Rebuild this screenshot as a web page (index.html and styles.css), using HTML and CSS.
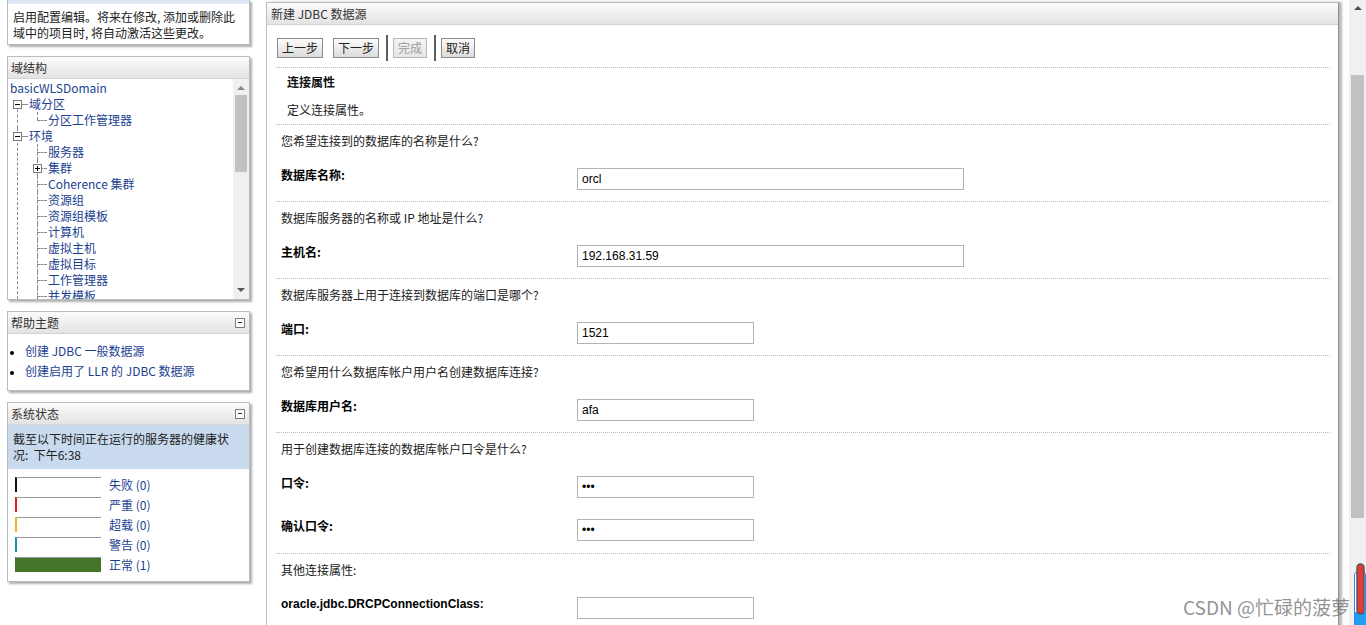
FILE: index.html
```html
<!DOCTYPE html>
<html lang="zh-CN">
<head>
<meta charset="utf-8">
<title>新建 JDBC 数据源</title>
<link rel="stylesheet" href="styles.css">
</head>
<body>
<div class="page">
  <aside class="side">
    <div class="panel panel-change">
      <div class="change-strip"></div>
      <p class="change-text">启用配置编辑。将来在修改, 添加或删除此<br>域中的项目时, 将自动激活这些更改。</p>
    </div>

    <div class="panel">
      <div class="panel-hd"><span>域结构</span></div>
      <div class="tree-box">
        <div class="tree">
          <a class="root" href="#">basicWLSDomain</a>
          <ul class="t1">
            <li><span class="tg"></span><a href="#">域分区</a>
              <ul class="t2">
                <li><a href="#">分区工作管理器</a></li>
              </ul>
            </li>
            <li><span class="tg"></span><a href="#">环境</a>
              <ul class="t2 open">
                <li><a href="#">服务器</a></li>
                <li><span class="tg plus"></span><a href="#">集群</a></li>
                <li><a href="#">Coherence 集群</a></li>
                <li><a href="#">资源组</a></li>
                <li><a href="#">资源组模板</a></li>
                <li><a href="#">计算机</a></li>
                <li><a href="#">虚拟主机</a></li>
                <li><a href="#">虚拟目标</a></li>
                <li><a href="#">工作管理器</a></li>
                <li><a href="#">并发模板</a></li>
              </ul>
            </li>
          </ul>
        </div>
        <div class="mini-scroll">
          <span class="arr up"></span>
          <span class="mini-thumb"></span>
          <span class="mini-fill"></span>
          <span class="arr down"></span>
        </div>
      </div>
    </div>

    <div class="panel">
      <div class="panel-hd"><span>帮助主题</span><span class="minbox"></span></div>
      <ul class="help">
        <li><a href="#">创建 JDBC 一般数据源</a></li>
        <li><a href="#">创建启用了 LLR 的 JDBC 数据源</a></li>
      </ul>
    </div>

    <div class="panel">
      <div class="panel-hd"><span>系统状态</span><span class="minbox"></span></div>
      <div class="status-note">截至以下时间正在运行的服务器的健康状<br>况:&nbsp; 下午6:38</div>
      <div class="health">
        <div class="hrow"><span class="bar c-fail"></span><a href="#">失败 (0)</a></div>
        <div class="hrow"><span class="bar c-crit"></span><a href="#">严重 (0)</a></div>
        <div class="hrow"><span class="bar c-over"></span><a href="#">超载 (0)</a></div>
        <div class="hrow"><span class="bar c-warn"></span><a href="#">警告 (0)</a></div>
        <div class="hrow"><span class="bar c-ok"></span><a href="#">正常 (1)</a></div>
      </div>
    </div>
  </aside>

  <main class="main">
    <div class="panel-hd main-hd"><span>新建 JDBC 数据源</span></div>
    <div class="main-body">
      <div class="toolbar">
        <button class="btn" type="button">上一步</button>
        <button class="btn gap" type="button">下一步</button>
        <span class="sep"></span>
        <button class="btn disabled" type="button" disabled>完成</button>
        <span class="sep"></span>
        <button class="btn" type="button">取消</button>
      </div>

      <section class="sec sec-head">
        <div class="sec-title">连接属性</div>
        <div class="sec-desc">定义连接属性。</div>
      </section>

      <section class="sec">
        <div class="q">您希望连接到的数据库的名称是什么?</div>
        <div class="field"><label class="lbl">数据库名称:</label><input class="inp long" type="text" value="orcl"></div>
      </section>

      <section class="sec">
        <div class="q">数据库服务器的名称或 IP 地址是什么?</div>
        <div class="field"><label class="lbl">主机名:</label><input class="inp long" type="text" value="192.168.31.59"></div>
      </section>

      <section class="sec">
        <div class="q">数据库服务器上用于连接到数据库的端口是哪个?</div>
        <div class="field"><label class="lbl">端口:</label><input class="inp short" type="text" value="1521"></div>
      </section>

      <section class="sec">
        <div class="q">您希望用什么数据库帐户用户名创建数据库连接?</div>
        <div class="field"><label class="lbl">数据库用户名:</label><input class="inp short" type="text" value="afa"></div>
      </section>

      <section class="sec sec-pw">
        <div class="q">用于创建数据库连接的数据库帐户口令是什么?</div>
        <div class="field"><label class="lbl">口令:</label><input class="inp short" type="password" value="abc"></div>
        <div class="field field-2"><label class="lbl">确认口令:</label><input class="inp short" type="password" value="abc"></div>
      </section>

      <section class="sec">
        <div class="q">其他连接属性:</div>
        <div class="field"><label class="lbl lbl-latin">oracle.jdbc.DRCPConnectionClass:</label><input class="inp short" type="text" value=""></div>
      </section>
    </div>
  </main>

  <div class="vscroll">
    <span class="v-up"></span>
    <span class="v-thumb"></span>
  </div>
</div>

<div class="watermark">CSDN @忙碌的菠萝</div>
<svg class="gauge" width="14" height="64" viewBox="0 0 14 64" aria-hidden="true">
  <rect x="2.5" y="10.5" width="11" height="54" rx="2" fill="#ffffff" stroke="#3d7cf0" stroke-width="1"/>
  <rect x="3" y="50" width="11" height="14" fill="#1ea0f2"/>
  <rect x="5" y="2" width="7" height="50" rx="3.5" fill="#e43a3a" stroke="#555" stroke-width="1.5"/>
</svg>
</body>
</html>
```

FILE: styles.css
```css
* { box-sizing: border-box; }

html, body { margin: 0; padding: 0; }

body {
  width: 1366px;
  height: 625px;
  overflow: hidden;
  position: relative;
  background: #ffffff;
  font-family: "Noto Sans CJK SC", "Noto Sans", sans-serif;
  font-size: 12px;
  color: #222222;
}

a { color: #1b3f8f; text-decoration: none; }

.page {
  display: flex;
  height: 625px;
  align-items: flex-start;
}

/* ---------- left column ---------- */
.side {
  width: 258px;
  flex: none;
  padding-left: 7px;
  display: flex;
  flex-direction: column;
  gap: 11px;
}

.panel {
  width: 243px;
  border: 1px solid #b9bcc0;
  background: #ffffff;
  box-shadow: 2px 2px 2px rgba(0, 0, 0, 0.32);
}

.panel-change { border-top: none; }

.change-strip {
  height: 4px;
  background: #dfe9f6;
  border-bottom: 1px solid #e9eef6;
}

.change-text {
  margin: 0;
  padding: 5px 5px 3px;
  line-height: 16px;
  color: #222222;
}

.panel-hd {
  height: 22px;
  line-height: 21px;
  padding-left: 3px;
  padding-right: 4px;
  display: flex;
  justify-content: space-between;
  align-items: center;
  color: #333333;
  background: linear-gradient(#fbfbfb, #e3e3e3);
  border-bottom: 1px solid #d3d3d3;
}

.minbox {
  position: relative;
  width: 10px;
  height: 10px;
  border: 1px solid #7d7d7d;
  background: #fbfbfb;
}
.minbox::after {
  content: "";
  position: absolute;
  left: 2px;
  top: 3px;
  width: 4px;
  height: 1px;
  background: #333;
}

/* tree */
.tree-box {
  display: flex;
  height: 220px;
}

.tree {
  flex: 1;
  height: 220px;
  padding: 1px 0 0 2px;
  line-height: 16px;
  overflow: hidden;
  white-space: nowrap;
}

.tree .root { display: block; }

.tree ul { list-style: none; margin: 0; padding: 0; }

.t1 > li { position: relative; padding-left: 19px; }
.t1 > li::before {
  content: "";
  position: absolute;
  left: 12px;
  top: 8px;
  width: 6px;
  border-top: 1px dashed #8a8a8a;
}
.t1 > li::after {
  content: "";
  position: absolute;
  left: 7px;
  top: 0;
  bottom: 0;
  border-left: 1px dashed #8a8a8a;
}
.t1 > li:first-child::after { top: 8px; }

.tg {
  position: absolute;
  top: 4px;
  width: 9px;
  height: 9px;
  border: 1px solid #7a7a7a;
  background: #ffffff;
  z-index: 1;
}
.t1 > li > .tg { left: 3px; }
.tg::before {
  content: "";
  position: absolute;
  left: 1px;
  top: 3px;
  width: 5px;
  height: 1px;
  background: #000;
}
.tg.plus::after {
  content: "";
  position: absolute;
  left: 3px;
  top: 1px;
  width: 1px;
  height: 5px;
  background: #000;
}

.t2 > li { position: relative; padding-left: 19px; }
.t2 > li::before {
  content: "";
  position: absolute;
  left: 8px;
  top: 8px;
  width: 10px;
  border-top: 1px dashed #8a8a8a;
}
.t2 > li::after {
  content: "";
  position: absolute;
  left: 8px;
  top: 0;
  bottom: 0;
  border-left: 1px dashed #8a8a8a;
}
.t2 > li:last-child::after { bottom: auto; height: 8px; }
.t2.open > li:last-child::after { bottom: 0; height: auto; }
.t2 > li > .tg { left: 4px; }

.mini-scroll {
  width: 16px;
  flex: none;
  background: #f0f0f0;
  display: flex;
  flex-direction: column;
  align-items: center;
}
.arr {
  width: 0;
  height: 0;
  border-left: 4px solid transparent;
  border-right: 4px solid transparent;
}
.arr.up { margin-top: 7px; border-bottom: 4px solid #8a8a8a; }
.arr.down { margin-bottom: 7px; border-top: 4px solid #555; }
.mini-thumb {
  margin-top: 5px;
  width: 12px;
  height: 77px;
  background: #c1c1c1;
}
.mini-fill { flex: 1; }

/* help */
.help {
  list-style: none;
  margin: 0;
  padding: 7px 0 9px 0;
  line-height: 20px;
}
.help li::before {
  content: "";
  display: inline-block;
  width: 4px;
  height: 4px;
  border-radius: 50%;
  background: #000;
  margin: 0 11px 0 2px;
  vertical-align: middle;
}

/* status */
.status-note {
  background: #c9daef;
  padding: 6px 5px;
  line-height: 16px;
  color: #222;
}
.health { padding: 8px 0 4px 7px; }
.hrow {
  display: flex;
  align-items: flex-start;
  height: 20px;
  line-height: 16px;
}
.bar {
  width: 86px;
  height: 15px;
  border-top: 1px solid #9a9a9a;
  border-left: 2px solid #000;
  margin-right: 8px;
}
.c-fail { border-left-color: #111; }
.c-crit { border-left-color: #e81c1c; }
.c-over { border-left-color: #f2b616; }
.c-warn { border-left-color: #1494b3; }
.c-ok { border-left-color: #44762a; background: #44762a; }

/* ---------- main ---------- */
.main {
  width: 1073px;
  flex: none;
  margin-left: 8px;
  margin-top: 2px;
  height: 660px;
  border: 1px solid #b9bcc0;
  border-right: 1px solid #8f8f8f;
  box-shadow: 3px 0 2px rgba(0, 0, 0, 0.28);
  background: #fff;
}

.main-hd { padding-left: 4px; }

.main-body { padding: 0 8px 0 9px; }

.toolbar {
  display: flex;
  align-items: center;
  height: 26px;
  margin-top: 10px;
  margin-bottom: 6px;
  padding-left: 1px;
}

.btn {
  height: 20px;
  padding: 0 4px;
  border: 1px solid #8c8c8c;
  background: linear-gradient(#fbfbfb, #dcdcdc);
  font-family: "Noto Sans CJK SC", sans-serif;
  font-size: 12px;
  line-height: 18px;
  color: #222;
}
.btn.gap { margin-left: 10px; }
.btn.disabled { color: #9a9a9a; border-color: #b8b8b8; background: linear-gradient(#f4f4f4, #e6e6e6); }

.sep {
  width: 2px;
  height: 26px;
  background: #5e5e5e;
  margin: 0 5px 0 7px;
}

.sec {
  border-top: 1px dotted #bdbdbd;
  padding-bottom: 11px;
}

.sec-head { padding: 6px 0 6px 11px; line-height: 16px; }
.sec-title { font-weight: bold; color: #111; }
.sec-desc { margin-top: 12px; }

.q {
  padding: 8px 0 0 5px;
  line-height: 16px;
  color: #222;
}

.field {
  display: flex;
  align-items: flex-start;
  padding-left: 5px;
  margin-top: 18px;
}
.field-2 { margin-top: 20px; }
.sec-pw { padding-bottom: 12px; }

.lbl {
  width: 296px;
  flex: none;
  line-height: 16px;
  font-weight: bold;
  color: #000;
}
.lbl-latin { font-family: "Liberation Sans", Arial, sans-serif; font-size: 12px; }

.inp {
  margin-top: 1px;
  height: 22px;
  border: 1px solid #b4b4b4;
  padding: 0 4px;
  font-family: "Liberation Sans", Arial, sans-serif;
  font-size: 12px;
  color: #000;
  background: #fff;
  outline: none;
}
.inp.long { width: 387px; }
.inp.short { width: 177px; }

/* ---------- page scrollbar ---------- */
.vscroll {
  margin-left: 10px;
  width: 17px;
  height: 625px;
  flex: none;
  background: #f0f0f0;
  display: flex;
  flex-direction: column;
  align-items: center;
}
.v-up {
  margin-top: 6px;
  width: 0;
  height: 0;
  border-left: 4px solid transparent;
  border-right: 4px solid transparent;
  border-bottom: 4px solid #505050;
}
.v-thumb {
  margin-top: 65px;
  width: 13px;
  height: 443px;
  background: #c1c1c1;
}

/* overlays */
.watermark {
  position: absolute;
  right: 16px;
  top: 595px;
  font-family: "Noto Sans CJK SC", sans-serif;
  font-size: 19px;
  line-height: 24px;
  color: rgba(110, 110, 110, 0.75);
  white-space: nowrap;
}

.gauge {
  position: absolute;
  left: 1352px;
  top: 562px;
}
```
